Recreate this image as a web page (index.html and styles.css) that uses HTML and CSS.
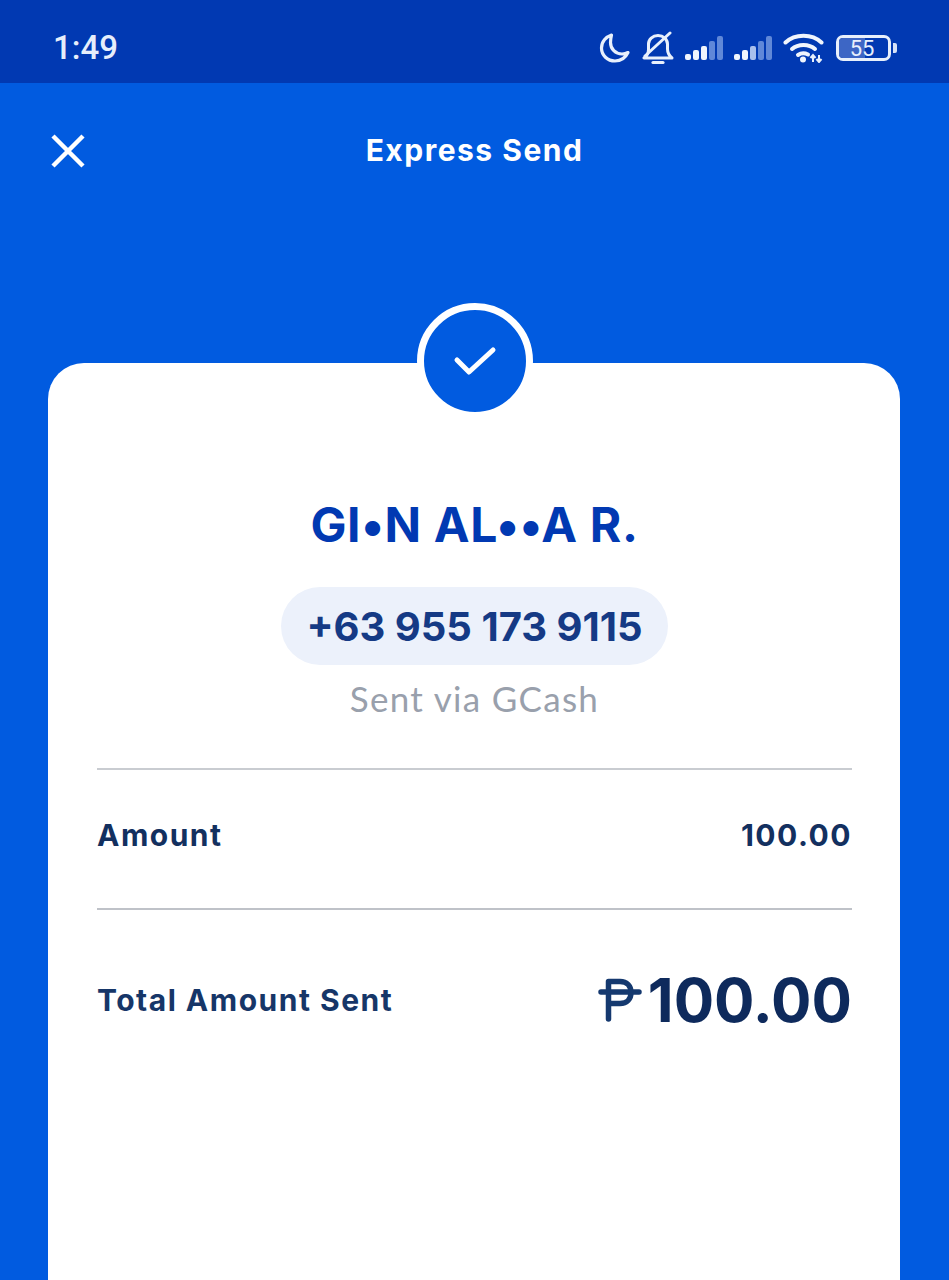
FILE: index.html
```html
<!DOCTYPE html>
<html>
<head>
<meta charset="utf-8">
<title>Express Send</title>
<link rel="stylesheet" href="styles.css">
</head>
<body>
<div class="StatusBar">
	<span class="Clock">1:49</span>
	<div class="StatusIcons">
		<svg class="IconMoon" width="32" height="32" viewBox="0 0 32 32"><path d="M12.500 3C7 4.800 2.500 9.800 2.500 16c0 7.300 6 13 13.500 13 5.500 0 10.500-3.300 13-8.500-1.800 1-3.800 1.500-6 1.500-6.500 0-11.500-5-11.500-11.500 0-2.700.5-5.200 1-7.500z" fill="none" stroke="#e8f0fc" stroke-width="3.200" stroke-linejoin="round"/></svg>
		<svg class="IconBell" width="32" height="34" viewBox="0 0 32 34"><path d="M2 27h28c-3-2.500-4.500-5-4.500-9v-5c0-4.500-4-8.500-9.500-8.500S6.500 8.500 6.500 13v5.500C6.500 22 5 25 2 27z" fill="none" stroke="#e8f0fc" stroke-width="3" stroke-linejoin="round"/><path d="M11 31.500h10" stroke="#e8f0fc" stroke-width="3.200" stroke-linecap="round"/><path d="M3 25L28 2" stroke="#e8f0fc" stroke-width="3" stroke-linecap="round"/></svg>
		<div class="Signal">
			<i class="Bar Bar1"></i><i class="Bar Bar2"></i><i class="Bar Bar3"></i><i class="Bar Bar4 BarDim"></i><i class="Bar Bar5 BarDim"></i>
		</div>
		<div class="Signal">
			<i class="Bar Bar1"></i><i class="Bar Bar2"></i><i class="Bar Bar3 BarMid"></i><i class="Bar Bar4 BarDim"></i><i class="Bar Bar5 BarDim"></i>
		</div>
		<svg class="IconWifi" width="42" height="30" viewBox="0 0 42 30"><g fill="none" stroke="#f0f5fd" stroke-width="4" stroke-linecap="round"><path d="M2.500 9.500C12 .5 29 .5 38.500 9.500"/><path d="M9 16C15 10.500 26 10.500 32 16"/><path d="M15 22C18 20 22 20 25 21.500"/></g><circle cx="20" cy="26.500" r="3" fill="#f0f5fd"/><path d="M30 22v7M36 22v7M27.500 25l2.500-3 2.500 3M33.500 26l2.500 3 2.500-3" fill="none" stroke="#e8f0fc" stroke-width="2"/></svg>
		<div class="Battery">
			<div class="BatteryBody"><div class="BatteryFill"></div><span class="BatteryText">55</span></div>
			<div class="BatteryTip"></div>
		</div>
	</div>
</div>

<div class="Header">
	<svg class="IconClose" width="36" height="36" viewBox="0 0 36 36"><path d="M3 3L33 33M33 3L3 33" stroke="#fff" stroke-width="4.500"/></svg>
	<span class="HeaderTitle">Express Send</span>
</div>

<div class="Card">
	<div class="CheckRing">
		<svg width="44" height="32" viewBox="0 0 44 32"><path d="M4 15L16 27L40 5" fill="none" stroke="#fff" stroke-width="5" stroke-linecap="round" stroke-linejoin="round"/></svg>
	</div>
	<div class="Name">GI•N AL••A R.</div>
	<div class="Phone">+63 955 173 9115</div>
	<div class="Via">Sent via GCash</div>
	<div class="Row RowAmount">
		<span class="RowLabel">Amount</span>
		<span class="RowValue">100.00</span>
	</div>
	<div class="Row RowTotal">
		<span class="RowLabel">Total Amount Sent</span>
		<span class="TotalValue">
			<svg class="IconPeso" width="44" height="44" viewBox="0 0 44 44"><path d="M10.500 41V3.500H22C29 3.500 33 8 33 14.500S29 25.500 22 25.500H10.500M3 14h38" fill="none" stroke="#15396f" stroke-width="5.500" stroke-linecap="round" stroke-linejoin="round"/></svg>
			100.00
		</span>
	</div>
</div>
</body>
</html>
```

FILE: styles.css
```css
html, body { margin: 0; padding: 0; }
body { width: 949px; height: 1280px; overflow: hidden; background: #015be0; font-family: "Inter", "Liberation Sans", sans-serif; color: #0f2b5c; }

.StatusBar { height: 83px; background: #0139b2; display: flex; align-items: center; justify-content: space-between; padding: 12px 52px 0 53px; box-sizing: border-box; color: #eef3fc; }
.Clock { font-family: "Roboto", sans-serif; font-weight: 500; font-size: 33px; color: #e6eefb; }
.StatusIcons { display: flex; align-items: center; gap: 11px; }

.Signal { display: flex; align-items: flex-end; gap: 2px; height: 24px; }
.Bar { display: block; width: 6px; background: #f0f5fd; border-radius: 2px; }
.BarDim { background: #6088d8; }
.BarMid { background: #a9c0ec; }
.Bar1 { height: 6px; }
.Bar2 { height: 10px; }
.Bar3 { height: 14px; }
.Bar4 { height: 19px; }
.Bar5 { height: 24px; }

.Battery { display: flex; align-items: center; gap: 2px; }
.BatteryBody { position: relative; width: 49px; height: 20px; border: 3px solid #e8f0fc; border-radius: 7px; overflow: hidden; }
.BatteryFill { width: 26px; height: 100%; background: #3d66c5; }
.BatteryText { position: absolute; left: 0; right: 3px; top: 0; bottom: 0; text-align: center; font-family: "Roboto", sans-serif; font-size: 22px; line-height: 21px; color: #e8f0fc; }
.BatteryTip { width: 4px; height: 10px; background: #d7e2f7; border-radius: 0 2px 2px 0; }

.Header { height: 140px; padding: 0 0 0 50px; display: flex; align-items: center; }
.IconClose { display: block; margin-top: -4px; }
.HeaderTitle { flex: 1; margin-left: -36px; margin-right: 50px; margin-top: -6px; text-align: center; font-family: "Inter", sans-serif; font-weight: 700; font-size: 30px; letter-spacing: 1.500px; color: #fff; }

.Card { margin: 140px 49px 0 48px; height: 917px; background: #fff; border-radius: 36px 36px 0 0; position: relative; display: flex; flex-direction: column; align-items: center; padding: 0 48px 0 49px; }
.CheckRing { position: absolute; left: 369px; top: -60px; width: 102px; height: 102px; border: 7px solid #fff; border-radius: 50%; background: #015be0; display: flex; align-items: center; justify-content: center; }

.Name { margin-top: 132px; font-family: "Inter", sans-serif; font-weight: 700; font-size: 48px; line-height: 60px; letter-spacing: .6px; color: #0139b2; }
.Phone { margin-top: 32px; height: 78px; line-height: 80px; padding: 0 25px; background: #ecf1fb; border-radius: 39px; font-family: "Inter", sans-serif; font-weight: 700; font-size: 40px; letter-spacing: 0; color: #153a85; }
.Via { margin-top: 12px; font-family: "Lato", sans-serif; font-size: 35px; line-height: 42px; color: #99a0ac; letter-spacing: 1.300px; }

.Row { align-self: stretch; display: flex; align-items: center; justify-content: space-between; border-top: 2px solid #c9ccd1; box-sizing: border-box; }
.RowAmount { margin-top: 49px; height: 140px; padding-bottom: 8px; }
.RowTotal { height: 186px; padding-bottom: 4px; border-top-color: #bfc2c8; }
.RowLabel { font-family: "Inter", sans-serif; font-weight: 700; font-size: 30px; letter-spacing: 1.500px; color: #13305f; }
.RowTotal .RowLabel { color: #163668; }
.RowValue { font-family: "Inter", sans-serif; font-weight: 700; font-size: 30px; letter-spacing: 1.500px; color: #13305f; }
.TotalValue { display: flex; align-items: center; gap: 6px; font-family: "Inter", sans-serif; font-weight: 700; font-size: 60px; color: #0e2a5c; }
.IconPeso { display: block; }
```
